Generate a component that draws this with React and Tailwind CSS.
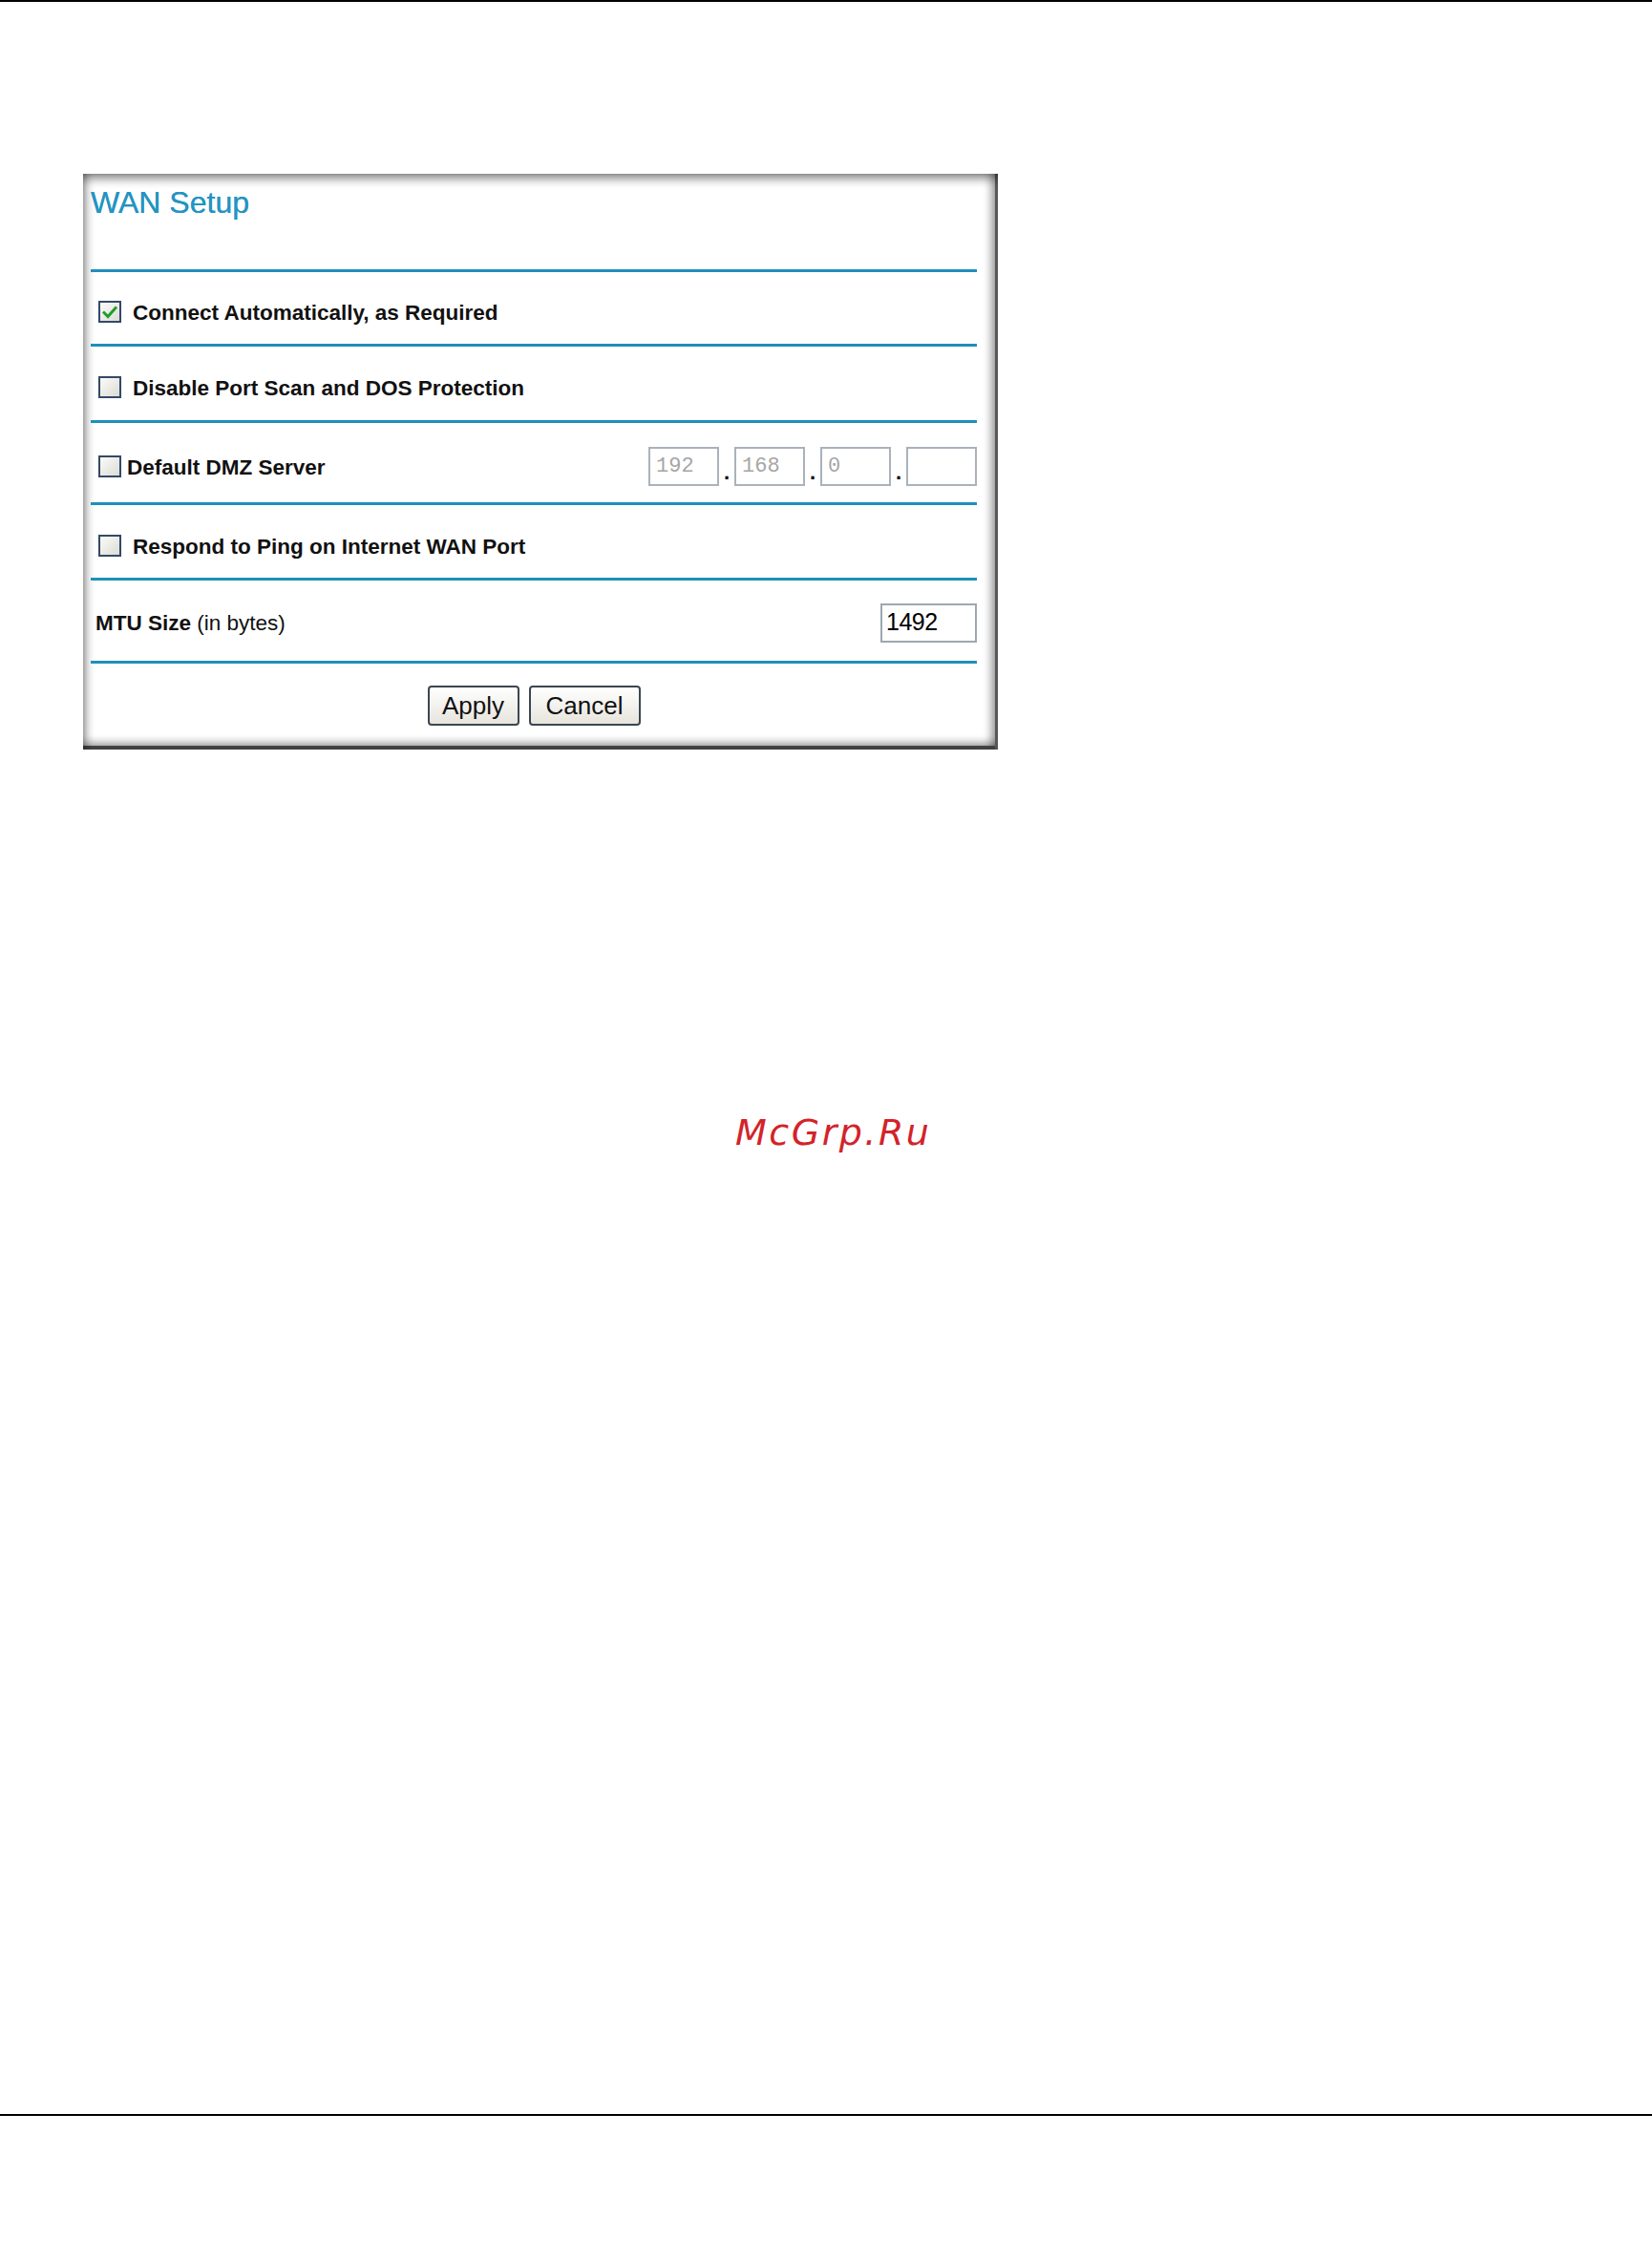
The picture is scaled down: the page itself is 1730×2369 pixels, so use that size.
import React from 'react';

const Rule = () => <div className="h-[3px] bg-[#1f8fbb]" />;

const CheckBox = ({ checked }) => (
  <span className="flex h-[23px] w-[24px] shrink-0 items-center justify-center border-2 border-[#34496a] bg-gradient-to-br from-[#fbfbf8] to-[#dcdcd6]">
    {checked && (
      <svg width="16" height="14" viewBox="0 0 16 14">
        <path d="M2 7.5 L6 11.5 L14 2.5" fill="none" stroke="#1f9e2a" strokeWidth="3" strokeLinecap="square" />
      </svg>
    )}
  </span>
);

const OctetBox = ({ value }) => (
  <span className="flex h-[41px] w-[74px] items-center border-2 border-[#aab2bb] pl-[6px] font-['Liberation_Mono',monospace] text-[22px] text-[#a6a6a6]">
    {value}
  </span>
);

const Dot = () => (
  <span className="flex h-[41px] w-[16px] items-end justify-center pb-[3px] text-[22px] font-bold leading-none text-black">.</span>
);

const Button = ({ children, width }) => (
  <button
    className={`${width} h-[42px] rounded-[4px] border-2 border-[#3b4652] bg-gradient-to-b from-[#ffffff] to-[#e6e4dc] text-[26px] leading-none text-[#111]`}
  >
    {children}
  </button>
);

const WanSetup = () => {
  return (
    <div className="h-[603px] w-[958px] bg-white pl-[8px] pr-[22px] shadow-[inset_0_12px_10px_-6px_rgba(0,0,0,0.4),inset_8px_0_8px_-4px_rgba(0,0,0,0.35),inset_-3px_0_0_#5a5a5a,inset_0_-4px_0_#444,inset_-11px_0_8px_-4px_rgba(0,0,0,0.4),inset_0_-11px_8px_-4px_rgba(0,0,0,0.4)]">
      <div className="h-[100px] pt-[14px]">
        <h1 className="text-[32px] leading-[32px] text-[#2494c2] [text-shadow:0_0_0.6px_#2494c2]">WAN Setup</h1>
      </div>
      <Rule />

      <div className="flex h-[75px] items-center pl-[8px] pt-[8px]">
        <CheckBox checked />
        <span className="ml-[12px] mt-[3px] font-bold">Connect Automatically, as Required</span>
      </div>
      <Rule />

      <div className="flex h-[77px] items-center pl-[8px] pt-[8px]">
        <CheckBox />
        <span className="ml-[12px] mt-[3px] font-bold">Disable Port Scan and DOS Protection</span>
      </div>
      <Rule />

      <div className="flex h-[83px] items-center pl-[8px] pt-[8px]">
        <CheckBox />
        <span className="ml-[6px] mt-[3px] font-bold">Default DMZ Server</span>
        <div className="ml-auto flex items-center">
          <OctetBox value="192" />
          <Dot />
          <OctetBox value="168" />
          <Dot />
          <OctetBox value="0" />
          <Dot />
          <OctetBox value="" />
        </div>
      </div>
      <Rule />

      <div className="flex h-[76px] items-center pl-[8px] pt-[8px]">
        <CheckBox />
        <span className="ml-[12px] mt-[3px] font-bold">Respond to Ping on Internet WAN Port</span>
      </div>
      <Rule />

      <div className="flex h-[84px] items-center pl-[5px] pt-[4px]">
        <span className="mt-[2px]">
          <span className="font-bold">MTU Size</span> (in bytes)
        </span>
        <span className="ml-auto flex h-[41px] w-[101px] items-center border-2 border-[#9ea7b1] pl-[4px] text-[25px] tracking-[-0.5px] text-black">
          1492
        </span>
      </div>
      <Rule />

      <div className="flex h-[88px] items-center justify-center gap-[10px]">
        <Button width="w-[96px]">Apply</Button>
        <Button width="w-[117px]">Cancel</Button>
      </div>
    </div>
  );
};

export default function App() {
  return (
    <div className="min-h-[2369px] w-[1730px] bg-white font-['Liberation_Sans',Arial,sans-serif] text-[22.5px] text-[#111]">
      <div className="h-[2px] bg-black" />
      <div className="ml-[87px] mt-[180px]">
        <WanSetup />
      </div>
      <div className="ml-[770px] mt-[382px] font-['DejaVu_Sans',sans-serif] text-[38px] italic leading-[38px] tracking-[2.5px] text-[#d3232a]">
        McGrp.Ru
      </div>
      <div className="mt-[1009px] h-[2px] bg-black" />
    </div>
  );
}
